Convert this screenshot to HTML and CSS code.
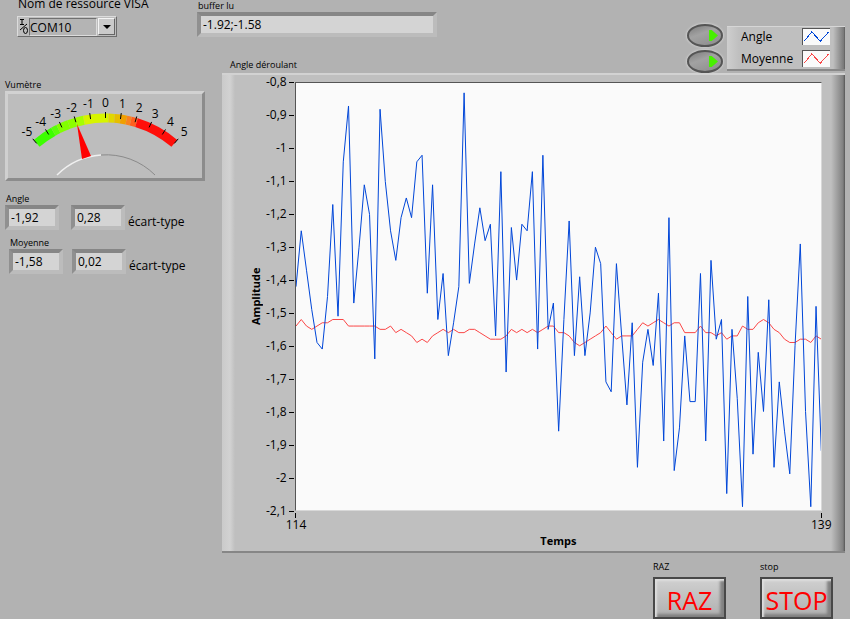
FILE: index.html
```html
<!DOCTYPE html>
<html lang="fr">
  <head>
    <meta charset="UTF-8" />
    <meta name="viewport" content="width=device-width, initial-scale=1.0" />
    <title>Vumètre</title>
    <link rel="stylesheet" href="styles.css">
  </head>
  <body>
    <div class="panel">
      <div class="visa">
        <label class="visa-label" for="visa">Nom de ressource VISA</label>
        <div class="combo">
          <svg class="io" width="10" height="17" viewBox="0 0 10 17" aria-hidden="true">
            <path d="M1 1.5h4M3 1.5v5M1 6.5h4M1 12L8 6" />
            <ellipse cx="6.5" cy="12.5" rx="2" ry="3" />
          </svg>
          <select id="visa">
            <option>COM10</option>
            <option>COM3</option>
          </select>
          <span class="arrow"></span>
        </div>
      </div>

      <div class="buffer">
        <label class="small" for="buffer">buffer lu</label>
        <input class="field" id="buffer" type="text" value="-1.92;-1.58" readonly />
      </div>

      <div class="legend">
        <div class="switches">
          <input type="checkbox" class="switch" aria-label="Angle" checked />
          <input type="checkbox" class="switch" aria-label="Moyenne" checked />
        </div>
        <div class="legend-box">
          <div class="legend-row">
            <span>Angle</span>
            <svg class="sample" viewBox="0 0 28 17"><path class="angle" d="M1 13L9 3L18 13L27 3" /></svg>
          </div>
          <div class="legend-row">
            <span>Moyenne</span>
            <svg class="sample" viewBox="0 0 28 17"><path class="moyenne" d="M1 13L9 3L18 13L27 3" /></svg>
          </div>
        </div>
      </div>

      <div class="gauges">
        <div class="small">Vumètre</div>
        <div class="meter">
          <svg id="meter" viewBox="8 94 194 84"></svg>
        </div>
        <div class="readings">
          <label class="reading">
            <span class="small">Angle</span>
            <input class="field" type="text" value="-1,92" readonly />
          </label>
          <label class="deviation">
            <input class="field" type="text" value="0,28" readonly />
            <span>écart-type</span>
          </label>
        </div>
        <div class="readings second">
          <label class="reading">
            <span class="small">Moyenne</span>
            <input class="field" type="text" value="-1,58" readonly />
          </label>
          <label class="deviation">
            <input class="field" type="text" value="0,02" readonly />
            <span>écart-type</span>
          </label>
        </div>
      </div>

      <div class="chart-label small">Angle déroulant</div>

      <div class="chart">
        <div class="y-title">Amplitude</div>
        <div class="y-axis">
          <span>-0,8</span>
          <span>-0,9</span>
          <span>-1</span>
          <span>-1,1</span>
          <span>-1,2</span>
          <span>-1,3</span>
          <span>-1,4</span>
          <span>-1,5</span>
          <span>-1,6</span>
          <span>-1,7</span>
          <span>-1,8</span>
          <span>-1,9</span>
          <span>-2</span>
          <span>-2,1</span>
        </div>
        <div class="plot">
          <svg viewBox="0 80 100 130" preserveAspectRatio="none">
            <polyline class="moyenne" id="moyenne" />
            <polyline class="angle" id="angle" />
          </svg>
        </div>
        <div class="x-axis">
          <span>114</span>
          <span>139</span>
        </div>
        <div class="x-title">Temps</div>
      </div>

      <div class="actions">
        <div class="action">
          <span class="small">RAZ</span>
          <button type="button">RAZ</button>
        </div>
        <div class="action">
          <span class="small">stop</span>
          <button type="button">STOP</button>
        </div>
      </div>
    </div>

    <script src="script.js"></script>
  </body>
</html>
```

FILE: styles.css
```css
* {
  box-sizing: border-box;
}

body {
  margin: 0;
  background-color: #b2b2b2;
  color: #000;
  font-family: "Open Sans", "Noto Sans", sans-serif;
  font-size: 12px;
  line-height: 16px;
}

input,
select,
button {
  font-family: inherit;
  font-size: 12px;
  color: #000;
  margin: 0;
}

.panel {
  display: grid;
  grid-template-columns: 197px 25px 1fr auto;
  grid-template-rows: 58px 15px 1fr auto;
  grid-template-areas:
    "visa buffer buffer legend"
    "gauges gauges label legend"
    "gauges gauges chart chart"
    "actions actions actions actions";
  min-height: 100vh;
  padding-right: 5px;
}

.small {
  display: block;
  font-size: 9px;
  line-height: 12px;
}

/* recessed text field */
.field {
  display: block;
  height: 25px;
  padding: 0 2px;
  border: 4px solid;
  border-color: #868686 #bcbcbc #bcbcbc #909090;
  border-radius: 0;
  background-color: #d4d4d4;
  outline: none;
}

.visa {
  grid-area: visa;
  padding-left: 17px;
}

.visa-label {
  display: block;
  height: 16px;
  line-height: 8px;
  padding-left: 1px;
}

.combo {
  display: flex;
  align-items: center;
  width: 100px;
  height: 21px;
  padding: 0 1px;
  border: 1px solid;
  border-color: #dcdcdc #6c6c6c #6c6c6c #dcdcdc;
  background-color: #bdbdbd;
}

.io {
  fill: none;
  stroke: #000;
  stroke-width: 1;
  flex: none;
}

.combo select {
  flex: 1;
  min-width: 0;
  height: 18px;
  padding: 0;
  appearance: none;
  border: 1px solid;
  border-color: #707070 #dcdcdc #dcdcdc #707070;
  border-radius: 0;
  background-color: #b4b4b4;
}

.arrow {
  display: flex;
  align-items: center;
  justify-content: center;
  width: 17px;
  height: 17px;
  margin-left: 1px;
  border: 1px solid;
  border-color: #f4f4f4 #666 #666 #f4f4f4;
  background-color: #cacaca;
  pointer-events: none;
}

.arrow::after {
  content: "";
  border: 4px solid transparent;
  border-top-color: #000;
  border-bottom: 0;
}

.buffer {
  grid-area: buffer;
}

.buffer .field {
  width: 240px;
  max-width: 100%;
}

.buffer .small {
  padding-left: 1px;
}

.legend {
  grid-area: legend;
  display: flex;
  gap: 4px;
  padding-top: 24px;
}

.switches {
  display: flex;
  flex-direction: column;
  gap: 3px;
}

.switch {
  display: flex;
  align-items: center;
  justify-content: flex-end;
  width: 36px;
  height: 23px;
  padding-right: 3px;
  appearance: none;
  border: 2px solid #555;
  border-radius: 50%;
  background: linear-gradient(160deg, #7c7c7c, #a2a2a2 40%, #8c8c8c);
  box-shadow: 0 0 2px 1px #ccc;
}

.switch::before {
  content: "";
  width: 9px;
  height: 11px;
  background-color: #4c6a38;
  clip-path: polygon(0 0, 30% 0, 100% 50%, 30% 100%, 0 100%);
}

.switch:checked::before {
  background-color: #48f000;
}

.legend-box {
  display: flex;
  flex-direction: column;
  gap: 5px;
  width: 118px;
  height: 45px;
  margin-top: 2px;
  padding: 1px 15px 0 14px;
  background: linear-gradient(to right, #cecece, #bfbfbf 12px, #bfbfbf calc(100% - 12px), #777 calc(100% - 1px), #555);
  border-top: 1px solid #d6d6d6;
  border-bottom: 2px solid #888;
}

.legend-row {
  display: flex;
  align-items: center;
  justify-content: space-between;
  height: 17px;
}

.sample {
  width: 28px;
  height: 17px;
  flex: none;
  border-top: 1px solid #555;
  border-left: 1px solid #555;
  background-color: #fafafa;
}

.angle,
.moyenne {
  fill: none;
  stroke-width: 1;
  vector-effect: non-scaling-stroke;
  shape-rendering: crispEdges;
}

.angle {
  stroke: #0046d8;
}

.moyenne {
  stroke: #fa4646;
}

.gauges {
  grid-area: gauges;
  padding: 21px 17px 0 5px;
}

.meter {
  height: 90px;
  border: 3px solid;
  border-color: #d2d2d2 #8c8c8c #8c8c8c #d0d0d0;
  background-color: #bdbdbd;
}

.meter svg {
  display: block;
  width: 100%;
  height: 100%;
}

.meter text {
  font-size: 12px;
  text-anchor: middle;
}

.meter .tick {
  stroke: #000;
  stroke-width: 1;
}

.meter .band {
  fill: none;
  stroke-width: 9;
}

.readings {
  display: flex;
  align-items: flex-end;
  gap: 12px;
  padding-top: 12px;
}

.readings.second {
  padding: 7px 0 0 4px;
  gap: 9px;
}

.reading,
.deviation {
  white-space: nowrap;
}

.reading .small {
  padding-left: 1px;
}

.readings .field {
  width: 54px;
}

.deviation {
  display: flex;
  align-items: flex-end;
  gap: 3px;
}

.chart-label {
  grid-area: label;
  padding: 1px 0 0 8px;
}

.chart {
  grid-area: chart;
  display: grid;
  grid-template-columns: 15px auto 1fr;
  grid-template-rows: 1fr 22px 18px;
  padding: 7px 23px 0 26px;
  border-top: 2px solid #d2d2d2;
  border-bottom: 2px solid #868686;
  background: linear-gradient(to right, #cacaca, #d2d2d2 8px, #bfbfbf 13px, #bfbfbf calc(100% - 14px), #808080 calc(100% - 2px), #555);
}

.y-title,
.x-title {
  font-weight: bold;
  text-align: center;
  font-size: 11px;
}

.y-title {
  writing-mode: vertical-rl;
  transform: rotate(180deg);
}

.y-axis {
  display: flex;
  flex-direction: column;
  justify-content: space-between;
  margin: -8px 1px -8px 3px;
}

.y-axis span {
  display: flex;
  align-items: center;
  justify-content: flex-end;
  gap: 2px;
}

.y-axis span::after {
  content: "";
  width: 5px;
  height: 1px;
  background-color: #000;
}

.plot {
  position: relative;
  border: 1px solid;
  border-color: #555 #d8d8d8 #d8d8d8 #555;
  background-color: #fafafa;
}

/* the traces take the size of the plot without stretching its row */
.plot svg {
  position: absolute;
  inset: 0;
  width: 100%;
  height: 100%;
}

.x-axis {
  grid-column: 3;
  display: flex;
  justify-content: space-between;
  margin: 0 -9px;
}

.x-axis span {
  width: 20px;
  line-height: 14px;
  text-align: center;
}

.x-axis span::before {
  content: "";
  display: block;
  width: 1px;
  height: 5px;
  margin: 2px auto 0;
  background-color: #000;
}

.x-title {
  grid-column: 3;
}

.actions {
  grid-area: actions;
  display: flex;
  justify-content: flex-end;
  gap: 34px;
  padding: 8px 12px 0 0;
}

.action .small {
  height: 16px;
}

.action button {
  display: block;
  width: 73px;
  height: 42px;
  padding: 4px 0 0;
  border: 2px solid #484848;
  background: linear-gradient(to bottom, #d0d0d0, #c0c0c0 50%, #b0b0b0);
  box-shadow: inset 2px 2px 2px #dedede, inset -4px -3px 3px #808080;
  color: #f00;
  font-size: 25px;
  line-height: 30px;
}
```

FILE: script.js
```js
// samples in hundredths, sign dropped (142 is -1,42)
const angle = [
  142, 125, 137, 149, 159, 161, 145, 117, 151, 104,
  87, 147, 130, 111, 120, 164, 88, 110, 125, 134,
  121, 115, 121, 104, 102, 144, 111, 152, 138, 163,
  153, 142, 83, 141, 129, 118, 128, 123, 157, 107,
  168, 124, 140, 123, 125, 107, 161, 102, 155, 147,
  186, 152, 122, 163, 139, 163, 150, 130, 135, 171,
  174, 135, 157, 178, 153, 197, 165, 155, 166, 144,
  189, 121, 198, 185, 157, 177, 177, 138, 189, 134,
  158, 152, 205, 155, 176, 209, 145, 193, 162, 180,
  146, 197, 171, 186, 199, 160, 129, 180, 209, 148,
  192,
];

const moyenne = [
  154, 152, 154, 155, 154, 153, 153, 152, 152, 152,
  154, 154, 154, 154, 154, 154, 155, 155, 154, 156,
  155, 156, 157, 159, 158, 159, 157, 156, 155, 156,
  155, 156, 156, 155, 155, 156, 157, 158, 158, 158,
  157, 155, 156, 155, 156, 155, 156, 155, 154, 154,
  156, 156, 157, 159, 160, 159, 158, 157, 156, 154,
  156, 158, 157, 157, 157, 155, 153, 154, 153, 152,
  153, 154, 153, 153, 156, 156, 156, 154, 156, 156,
  157, 156, 158, 157, 157, 154, 155, 155, 153, 152,
  153, 155, 156, 158, 159, 159, 158, 158, 159, 157,
  158,
];

function drawTrace(id, values) {
  const points = values.map((v, i) => i + "," + v).join(" ");
  document.getElementById(id).setAttribute("points", points);
}

const cx = 105.5;
const cy = 224;

// point of the dial for a value between -5 and 5
function polar(value, r) {
  const a = (value * 8.1 * Math.PI) / 180;
  return [cx + r * Math.sin(a), cy - r * Math.cos(a)];
}

const bands = [
  [-5, -3.64, "#3cff00"],
  [-3.64, -3.26, "#5aff0a"],
  [-3.26, -2.5, "#82ff00"],
  [-2.5, -2, "#8cff00"],
  [-2, -1.45, "#a5ff00"],
  [-1.45, 0.2, "#d7f500"],
  [0.2, 0.6, "#e1d700"],
  [0.6, 1, "#e6be00"],
  [1, 1.4, "#f0a000"],
  [1.4, 1.7, "#fa821e"],
  [1.7, 2.1, "#ff5f1e"],
  [2.1, 5, "#ff0f0a"],
];

function drawMeter() {
  let svg = "";
  for (const [from, to, color] of bands) {
    svg += `<path class="band" stroke="${color}" d="M${polar(from, 106)}A106 106 0 0 1 ${polar(to, 106)}" />`;
  }
  for (let v = -5; v <= 5; v++) {
    const [x1, y1] = polar(v, 106);
    const [x2, y2] = polar(v, 112);
    const [tx, ty] = polar(v, 121);
    svg += `<line class="tick" x1="${x1}" y1="${y1}" x2="${x2}" y2="${y2}" />`;
    svg += `<text x="${tx}" y="${ty + 4}">${v}</text>`;
  }
  svg += `<path fill="none" stroke="#f0f0f0" stroke-width="1.5" d="M57 175A69 69 0 0 1 101 155" />`;
  svg += `<path fill="none" stroke="#8a8a8a" d="M101 155A69 69 0 0 1 155 175" />`;
  svg += `<path fill="#f00" d="M77 124L82 159L91 156Z" />`;
  document.getElementById("meter").innerHTML = svg;
}

drawTrace("moyenne", moyenne);
drawTrace("angle", angle);
drawMeter();
```
